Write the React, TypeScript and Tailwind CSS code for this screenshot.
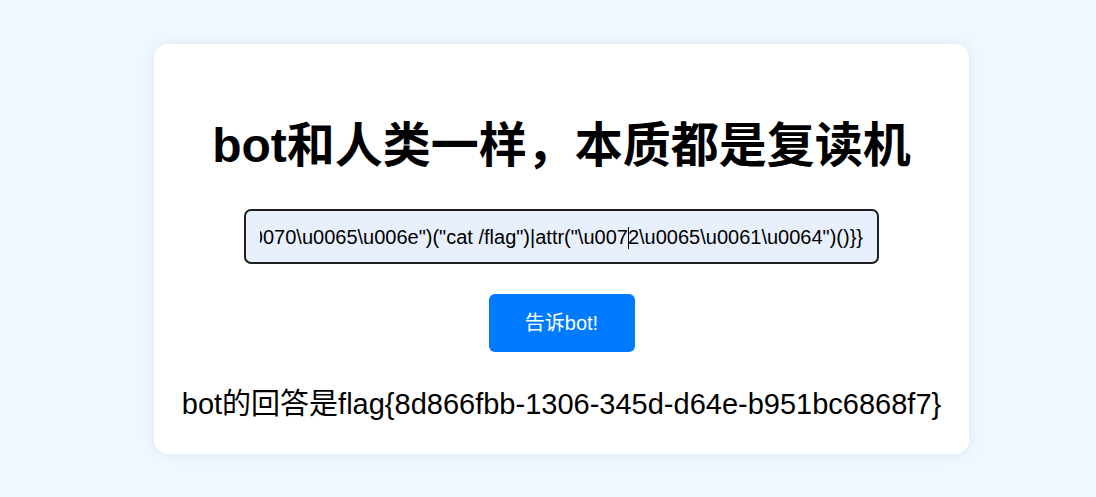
import React from "react";

const before =
  '\\u0070\\u0065\\u006e")("cat /flag")|attr("\\u007';
const after = '2\\u0065\\u0061\\u0064")()}}';

export default function App() {
  return (
    <div
      className="min-h-[497px] w-full bg-[#f0f8ff] pt-[44px] pb-[43px]"
      style={{ fontFamily: '"Liberation Sans", Arial, "Noto Sans CJK SC", sans-serif' }}
    >
      <div className="ml-[154px] flex w-[815px] flex-col items-center rounded-[14px] bg-white pt-[74px] pb-[33px] shadow-[0_0_12px_rgba(160,185,215,0.25)]">
        <h1 className="text-[48px] font-bold leading-[56px] text-black">
          bot和人类一样，本质都是复读机
        </h1>
        <div className="mt-[35px] flex h-[55px] w-[635px] items-center rounded-[7px] border-2 border-[#1f1f1f] bg-[#e8f0fe] px-[14px]">
          <div className="flex w-full justify-end overflow-hidden">
            <span className="whitespace-nowrap text-[20px] leading-[24px] text-black">
              {before}
              <span className="relative">
                <span className="absolute left-0 top-[1px] h-[22px] w-px bg-black" />
              </span>
              {after}
            </span>
          </div>
        </div>
        <button className="mt-[30px] flex h-[58px] w-[146px] items-center justify-center rounded-[6px] bg-[#007bff] text-[20px] text-white">
          告诉bot!
        </button>
        <p className="mt-[36px] text-[29px] leading-[33px] text-black">
          bot的回答是flag{"{"}8d866fbb-1306-345d-d64e-b951bc6868f7{"}"}
        </p>
      </div>
    </div>
  );
}
